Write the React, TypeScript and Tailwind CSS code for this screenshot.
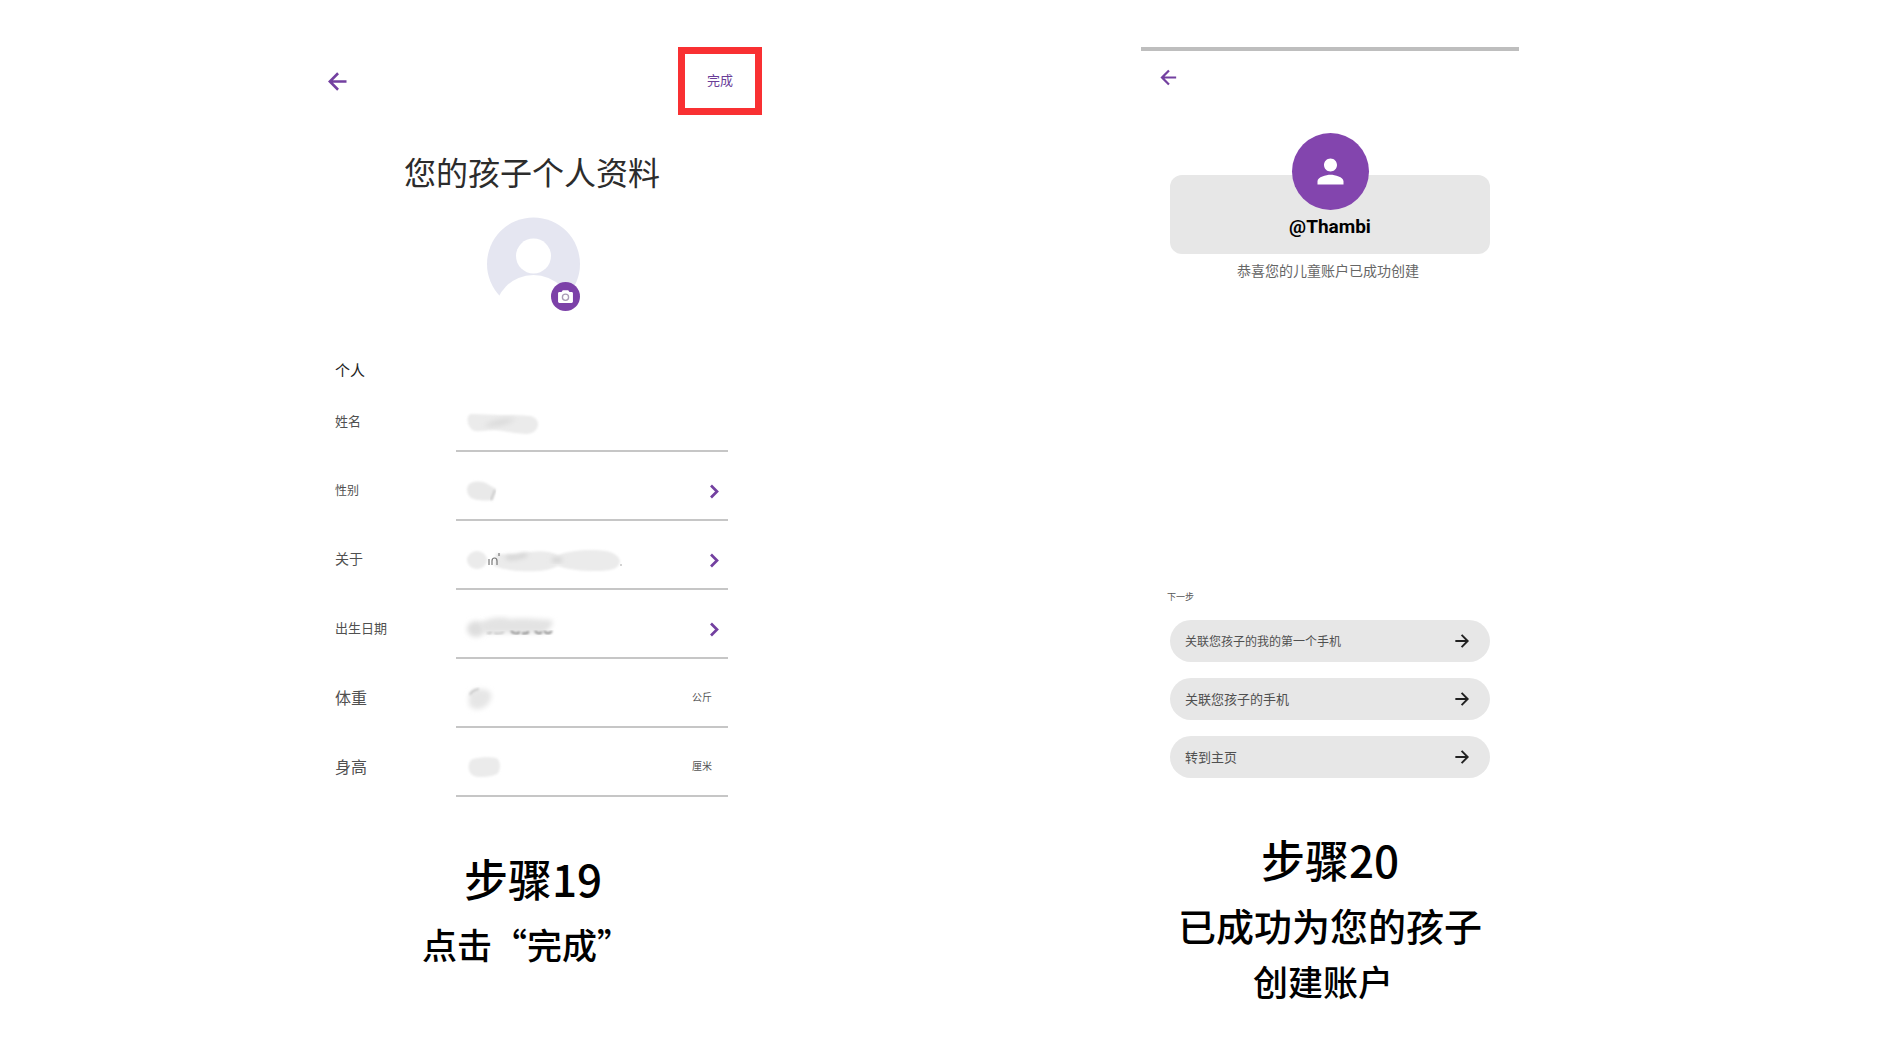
import React, { useState } from 'react';
import { MdPerson } from 'react-icons/md';

type Field = {
  id: string;
  label: string;
  labelClass: string;
  kind: 'text' | 'link';
  unit?: string;
};

const fields: Field[] = [
  { id: 'name', label: '姓名', labelClass: 'text-[13px]', kind: 'text' },
  { id: 'gender', label: '性别', labelClass: 'text-[12px]', kind: 'link' },
  { id: 'about', label: '关于', labelClass: 'text-[14px]', kind: 'link' },
  { id: 'birthday', label: '出生日期', labelClass: 'text-[13px]', kind: 'link' },
  { id: 'weight', label: '体重', labelClass: 'text-[16px]', kind: 'text', unit: '公斤' },
  { id: 'height', label: '身高', labelClass: 'text-[16px]', kind: 'text', unit: '厘米' },
];

const nextSteps = [
  { label: '关联您孩子的我的第一个手机', textClass: 'text-[12px]' },
  { label: '关联您孩子的手机', textClass: 'text-[13px]' },
  { label: '转到主页', textClass: 'text-[13px]' },
];

// Smudged-out private values, one shape per field
function Smudge({ id }: { id: string }) {
  return (
    <svg width="180" height="32" viewBox="0 0 180 32" className="block" aria-hidden="true">
      <defs>
        <filter id="soft" x="-20%" y="-30%" width="140%" height="160%">
          <feGaussianBlur stdDeviation="1.2" />
        </filter>
        <filter id="softer" x="-40%" y="-60%" width="180%" height="220%">
          <feGaussianBlur stdDeviation="2.4" />
        </filter>
      </defs>
      {id === 'name' && (
        <>
          <path d="M11 7c10 0 18 1 28 1 12 0 22 0 31 1 6 1 8 5 8 8 0 6-5 10-12 10-12 0-22-4-34-4-6 0-12 2-17 1-8-2-10-16-4-17z" fill="#ebebeb" filter="url(#soft)" />
          <path d="M24 19c8-6 20-8 32-7-8 5-18 9-32 7z" fill="#dadada" filter="url(#softer)" />
        </>
      )}
      {id === 'gender' && (
        <>
          <path d="M11 7c7-3 14-1 18 2l7 4-3 11c-8 1-18 1-23-3-4-4-4-12 1-14z" fill="#e9e9e9" filter="url(#soft)" />
          <path d="M35 14l-4 10" stroke="#c8c8c8" strokeWidth="2" filter="url(#soft)" />
        </>
      )}
      {id === 'about' && (
        <>
          <g fill="#ebebeb" filter="url(#soft)">
            <ellipse cx="17" cy="15" rx="10" ry="9" />
            <path d="M36 8c10 3 20 0 28 0 12-2 22-3 34 2 14-5 32-6 48-4 9 2 14 6 14 11-2 7-8 8-18 9-16 0-28 0-44-5-10 5-24 6-38 5-12-1-22-3-26-5z" />
          </g>
          <path d="M46 12c8 2 14 0 21-3M92 15l10 0" stroke="#cfcfcf" strokeWidth="4" fill="none" filter="url(#softer)" />
          <path d="M23 16h6" stroke="#999" strokeWidth="4" filter="url(#softer)" />
          <path d="M29 20v-6M32 20v-4c0-4 5-4 5 0v4M39 8v3" stroke="#777" strokeWidth="1.2" fill="none" />
          <circle cx="161" cy="20" r="1" fill="#c4c4c4" />
        </>
      )}
      {id === 'birthday' && (
        <>
          <ellipse cx="16" cy="15" rx="9" ry="8" fill="#dedede" filter="url(#softer)" />
          <path d="M20 9c8-5 20-7 30-4 14-1 26 0 42 1 2 5-2 9-8 13H32c-8 1-12-2-12-10z" fill="#e3e3e3" filter="url(#softer)" />
          <path d="M27 19c3 1 4 0 5-1M34 19c4 1 7 1 10-1" stroke="#c4c4c4" strokeWidth="2" fill="none" filter="url(#soft)" />
          <path d="M51 17c2 3 7 3 9 1M62 19c2 1 5 0 7-1M75 17c2 3 5 3 7 1M84 17c2 3 6 3 8 0" stroke="#8a8a8a" strokeWidth="2" fill="none" filter="url(#soft)" />
        </>
      )}
      {id === 'weight' && (
        <>
          <path d="M11 9c6-4 16-4 20 1 2 7-4 14-11 16-7 1-12-2-11-7 0-3-1-7 2-10z" fill="#e6e6e6" filter="url(#softer)" />
          <path d="M10 12c1-4 5-5 9-6" stroke="#c8c8c8" strokeWidth="2" fill="none" filter="url(#soft)" />
        </>
      )}
      {id === 'height' && (
        <path d="M13 7c7-2 18-2 23-1 5 2 5 13 1 16-6 3-17 4-23 2-7-3-7-15-1-17z" fill="#ebebeb" filter="url(#soft)" />
      )}
    </svg>
  );
}

function Arrow({ size, back = false }: { size: number; back?: boolean }) {
  return (
    <svg width={size} height={size} viewBox="0 0 24 24" fill="none" stroke="currentColor" strokeWidth="2.3" aria-hidden="true">
      <path d={back ? 'M20 12H5.5M12.5 4.7 5.2 12l7.3 7.3' : 'M4 12h14.5M11.5 4.7l7.3 7.3-7.3 7.3'} />
    </svg>
  );
}

function Chevron() {
  return (
    <svg width="10" height="16" viewBox="0 0 10 16" fill="none" aria-hidden="true">
      <path d="M1 1.5 7 7.5l-6 6" stroke="#7340a0" strokeWidth="2.7" />
    </svg>
  );
}

function ChildAvatar() {
  return (
    <div className="relative mx-auto mt-5 h-[94px] w-[94px]">
      <svg viewBox="0 0 94 94" className="h-full w-full" aria-hidden="true">
        <defs>
          <mask id="person">
            <rect width="94" height="94" fill="#fff" />
            <circle cx="47.5" cy="39" r="17.5" fill="#000" />
            <circle cx="47.5" cy="97" r="39" fill="#000" />
          </mask>
        </defs>
        <circle cx="47.5" cy="47" r="46.5" fill="#e5e6f1" mask="url(#person)" />
      </svg>
      <button type="button" aria-label="更换照片" className="absolute right-0 bottom-0 h-[29px] w-[29px] rounded-full bg-[#7c41a8]">
        <svg viewBox="0 0 30 30" className="h-full w-full" aria-hidden="true">
          <path d="M12.2 8.5h5.6l1.3 1.8h2.2c.8 0 1.4.6 1.4 1.4v8.6c0 .8-.6 1.4-1.4 1.4H8.7c-.8 0-1.4-.6-1.4-1.4v-8.6c0-.8.6-1.4 1.4-1.4h2.2z" fill="#fff" />
          <circle cx="15" cy="15.8" r="3.2" fill="none" stroke="#a99bb5" strokeWidth="1.4" />
        </svg>
      </button>
    </div>
  );
}

function FieldRow({ field }: { field: Field }) {
  const [value, setValue] = useState('');

  return (
    <div className="flex h-[69px]">
      <label htmlFor={field.id} className={`flex w-[121px] shrink-0 items-center pt-1.5 text-[#505050] ${field.labelClass}`}>
        {field.label}
      </label>
      {field.kind === 'link' ? (
        <button id={field.id} type="button" className="flex flex-1 items-center justify-between border-b-2 border-[#c6c6c6] pt-3 pr-2 pl-1">
          <Smudge id={field.id} />
          <Chevron />
        </button>
      ) : (
        <div className="relative flex flex-1 items-center border-b-2 border-[#c6c6c6] pt-3 pr-4 pl-1">
          <Smudge id={field.id} />
          <input
            id={field.id}
            type="text"
            value={value}
            onChange={(e) => setValue(e.target.value)}
            className="absolute inset-0 w-full bg-transparent pt-3 pl-3 outline-none"
          />
          {field.unit && <span className="ml-auto pb-1 text-[10px] text-[#555]">{field.unit}</span>}
        </div>
      )}
    </div>
  );
}

function ProfileStep() {
  return (
    <section className="col-start-2">
      <header className="flex items-center justify-between pl-5">
        <button type="button" aria-label="返回" className="text-[#7340a0]">
          <Arrow size={27} back />
        </button>
        <button type="button" className="h-[68px] w-[84px] border-7 border-[#f93032] pb-0.5 text-[13px] text-[#6a3d98]">
          完成
        </button>
      </header>

      <h1 className="mt-8 pr-0.5 pb-0.5 text-center text-[32px] leading-[48px] text-[#2c2c2c]">您的孩子个人资料</h1>
      <ChildAvatar />

      <form className="mt-[47px] pr-[34px] pl-[31px]" onSubmit={(e) => e.preventDefault()}>
        <h2 className="pb-px text-[15px] leading-6 text-[#222]">个人</h2>
        {fields.map((field) => (
          <FieldRow key={field.id} field={field} />
        ))}
      </form>

      <div className="text-center font-medium text-black">
        <h2 className="mt-[49px] text-[44px] leading-[64px]">步骤19</h2>
        <p className="mt-2 pr-3 text-[35px] leading-[52px]">点击“完成”</p>
      </div>
    </section>
  );
}

function SuccessStep() {
  return (
    <section className="col-start-4">
      <div className="h-1 bg-[#bebebe]" />
      <button type="button" aria-label="返回" className="mt-[15px] ml-4 block text-[#7340a0]">
        <Arrow size={23} back />
      </button>

      <div className="mx-[29px] mt-[86px] flow-root rounded-xl bg-[#e7e7e7] pb-[13px]">
        <div className="mx-auto -mt-[42px] flex h-[77px] w-[77px] items-center justify-center rounded-full bg-[#8345ae] text-white">
          <MdPerson size={39} />
        </div>
        <p className="mt-[3px] text-center font-['Roboto'] text-[19px] leading-7 font-bold text-black">@Thambi</p>
      </div>
      <p className="mt-1 pr-1 text-center text-[14px] leading-6 text-[#666]">恭喜您的儿童账户已成功创建</p>

      <h2 className="mt-[307px] ml-[26px] text-[9px] leading-4 text-[#555]">下一步</h2>
      <div className="mx-[29px] mt-[15px] flex flex-col gap-4">
        {nextSteps.map((step) => (
          <button
            key={step.label}
            type="button"
            className={`flex h-[42px] items-center justify-between rounded-full bg-[#e7e7e7] pr-[18px] pl-[15px] text-[#505050] ${step.textClass}`}
          >
            {step.label}
            <span className="text-[#222]">
              <Arrow size={20} />
            </span>
          </button>
        ))}
      </div>

      <div className="text-center font-medium text-black">
        <h2 className="mt-[49px] text-[44px] leading-[64px]">步骤20</h2>
        <p className="mt-1.5 text-[38px] leading-[56px]">已成功为您的孩子</p>
        <p className="pr-3.5 text-[35px] leading-[56px]">创建账户</p>
      </div>
    </section>
  );
}

function App() {
  return (
    <main
      lang="zh-CN"
      className="grid min-h-screen grid-cols-[304fr_458fr_379fr_378fr_365fr] bg-white pt-[47px] font-['Noto_Sans_CJK_SC',sans-serif]"
    >
      <ProfileStep />
      <SuccessStep />
    </main>
  );
}

export default App;
